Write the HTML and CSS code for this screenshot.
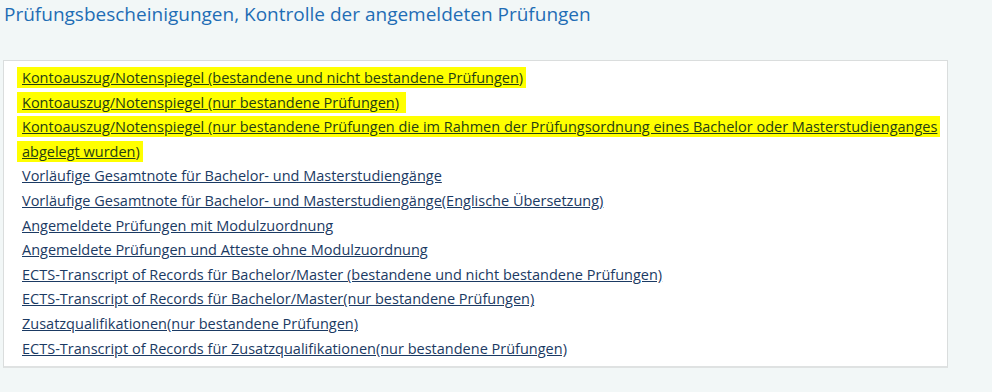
FILE: index.html
```html
<!DOCTYPE html>
<html lang="de">
<head>
    <meta charset="UTF-8">
    <title>Prüfungsbescheinigungen</title>
    <link rel="stylesheet" href="styles.css">
</head>
<body>
    <h1 class="page-title">Prüfungsbescheinigungen, Kontrolle der angemeldeten Prüfungen</h1>

    <div class="report-box">
        <ul class="report-list">
            <li><span class="marked"><a href="#">Kontoauszug/Notenspiegel (bestandene und nicht bestandene Prüfungen</a>)</span></li>
            <li><span class="marked"><a href="#">Kontoauszug/Notenspiegel (nur bestandene Prüfungen</a>)&nbsp;</span></li>
            <li><span class="marked"><a href="#">Kontoauszug/Notenspiegel (nur bestandene Prüfungen die im Rahmen der Prüfungsordnung eines Bachelor oder Masterstudienganges abgelegt wurden</a>)</span></li>
            <li><a href="#">Vorläufige Gesamtnote für Bachelor- und Masterstudiengänge</a></li>
            <li><a href="#">Vorläufige Gesamtnote für Bachelor- und Masterstudiengänge(Englische Übersetzung)</a></li>
            <li><a href="#">Angemeldete Prüfungen mit Modulzuordnung</a></li>
            <li><a href="#">Angemeldete Prüfungen und Atteste ohne Modulzuordnung</a></li>
            <li><a href="#">ECTS-Transcript of Records für Bachelor/Master (bestandene und nicht bestandene Prüfungen)</a></li>
            <li><a href="#">ECTS-Transcript of Records für Bachelor/Master(nur bestandene Prüfungen)</a></li>
            <li><a href="#">Zusatzqualifikationen(nur bestandene Prüfungen)</a></li>
            <li><a href="#">ECTS-Transcript of Records für Zusatzqualifikationen(nur bestandene Prüfungen)</a></li>
        </ul>
    </div>
</body>
</html>
```

FILE: styles.css
```css
body {
    margin: 0;
    background-color: #f2f7f7;
    font-family: "Open Sans", "Liberation Sans", sans-serif;
    color: #1f3a5f;
}

.page-title {
    margin: 0;
    padding: 1px 4px 0;
    font-size: 19px;
    font-weight: normal;
    line-height: 26px;
    color: #1f6db5;
}

.report-box {
    width: 925px;
    margin: 33px 0 0 3px;
    padding: 5px 0 5px 18px;
    background-color: #fff;
    border: 1px solid #dadddd;
    border-bottom: 2px solid #dfe2e2;
}

.report-list {
    list-style-type: none;
    margin: 0;
    padding: 0;
    font-size: 14.5px;
    line-height: 24.6px;
}

.report-list a {
    color: #1b3a63;
    text-decoration: underline;
}

.marked {
    background-color: #ffff00;
    padding: 1px 3px 1px 5px;
    margin-left: -5px;
    color: #2a3f14;
    -webkit-box-decoration-break: clone;
    box-decoration-break: clone;
}

.marked a {
    color: #253e12;
}
```
